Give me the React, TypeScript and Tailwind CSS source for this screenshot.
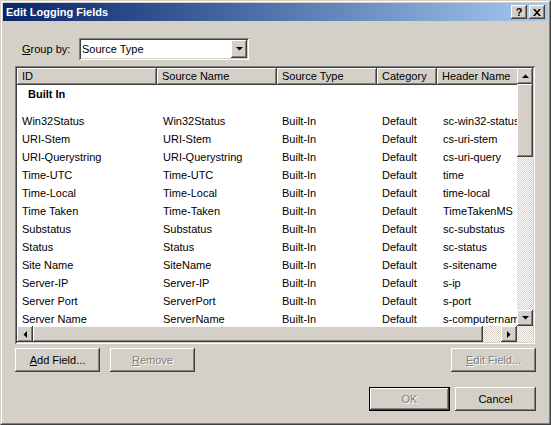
import React from "react";

const raised =
  "bg-[#d4d0c8] shadow-[inset_-1px_-1px_#404040,inset_1px_1px_#ffffff,inset_-2px_-2px_#808080,inset_2px_2px_#d4d0c8]";
const sunken =
  "shadow-[inset_1px_1px_#808080,inset_-1px_-1px_#ffffff,inset_2px_2px_#404040,inset_-2px_-2px_#d4d0c8]";
const checker =
  "bg-[repeating-conic-gradient(#d4d0c8_0_25%,#ffffff_0_50%)] bg-[length:2px_2px]";
const disabledText = "text-[#808080] [text-shadow:1px_1px_0_#ffffff]";

const rows: string[][] = [
  ["Win32Status", "Win32Status", "Built-In", "Default", "sc-win32-status"],
  ["URI-Stem", "URI-Stem", "Built-In", "Default", "cs-uri-stem"],
  ["URI-Querystring", "URI-Querystring", "Built-In", "Default", "cs-uri-query"],
  ["Time-UTC", "Time-UTC", "Built-In", "Default", "time"],
  ["Time-Local", "Time-Local", "Built-In", "Default", "time-local"],
  ["Time Taken", "Time-Taken", "Built-In", "Default", "TimeTakenMS"],
  ["Substatus", "Substatus", "Built-In", "Default", "sc-substatus"],
  ["Status", "Status", "Built-In", "Default", "sc-status"],
  ["Site Name", "SiteName", "Built-In", "Default", "s-sitename"],
  ["Server-IP", "Server-IP", "Built-In", "Default", "s-ip"],
  ["Server Port", "ServerPort", "Built-In", "Default", "s-port"],
  ["Server Name", "ServerName", "Built-In", "Default", "s-computername"],
];

const cols = [
  { w: "w-[140px]", label: "ID", pl: "pl-[5px]", bpl: "pl-[5px]" },
  { w: "w-[120px]", label: "Source Name", pl: "pl-[5px]", bpl: "pl-[6px]" },
  { w: "w-[100px]", label: "Source Type", pl: "pl-[5px]", bpl: "pl-[5px]" },
  { w: "w-[60px]", label: "Category", pl: "pl-[5px]", bpl: "pl-[5px]" },
  { w: "w-[100px]", label: "Header Name", pl: "pl-[5px]", bpl: "pl-[6px]" },
];

function Arrow({ dir }: { dir: "up" | "down" | "left" | "right" }) {
  const pts: Record<string, string> = {
    up: "0,4 7,4 3.5,0.5",
    down: "0,0 7,0 3.5,3.5",
    left: "4,0 4,7 0.5,3.5",
    right: "0,0 0,7 3.5,3.5",
  };
  const vertical = dir === "up" || dir === "down";
  return (
    <svg
      width={vertical ? 7 : 4}
      height={vertical ? 4 : 7}
      viewBox={vertical ? "0 0 7 4" : "0 0 4 7"}
      className="block"
    >
      <polygon points={pts[dir]} fill="#000000" />
    </svg>
  );
}

function ScrollBtn({ dir }: { dir: "up" | "down" | "left" | "right" }) {
  return (
    <div className={`w-[16px] h-[16px] shrink-0 flex items-center justify-center ${raised}`}>
      <Arrow dir={dir} />
    </div>
  );
}

function Button({
  children,
  w,
  disabled,
  isDefault,
}: {
  children: React.ReactNode;
  w: string;
  disabled?: boolean;
  isDefault?: boolean;
}) {
  const inner = (
    <div
      className={`h-full w-full flex items-center justify-center ${raised} ${
        disabled ? disabledText : "text-black"
      }`}
    >
      {children}
    </div>
  );
  if (isDefault) {
    return <div className={`${w} h-[24px] border border-black`}>{inner}</div>;
  }
  return <div className={`${w} h-[24px]`}>{inner}</div>;
}

export default function App() {
  return (
    <div className="w-[551px] h-[425px] font-['Liberation_Sans',Arial,sans-serif] text-[11px] leading-[13px] text-black select-none">
      <div className="w-full h-full border border-t-[#d4d0c8] border-l-[#d4d0c8] border-b-[#404040] border-r-[#404040]">
        <div className="w-full h-full border border-t-white border-l-white border-b-[#808080] border-r-[#808080] bg-[#d4d0c8] p-[1px] flex flex-col">
          {/* Title bar */}
          <div className="h-[18px] shrink-0 flex items-center bg-gradient-to-r from-[#0a246a] to-[#a6caf0] pl-[3px] pr-[3px]">
            <span className="text-white font-bold text-[11px]">Edit Logging Fields</span>
            <div className="ml-auto flex gap-[2px]">
              <div className={`w-[16px] h-[14px] flex items-center justify-center ${raised}`}>
                <span className="font-bold text-[11px] leading-[11px] text-black pt-[1px]">?</span>
              </div>
              <div className={`w-[16px] h-[14px] flex items-center justify-center ${raised}`}>
                <svg width="8" height="7" viewBox="0 0 8 7" className="block">
                  <path d="M0 0h2l2 2.2L6 0h2L5 3.5 8 7H6L4 4.8 2 7H0l3-3.5z" fill="#000" />
                </svg>
              </div>
            </div>
          </div>

          {/* Body */}
          <div className="flex-1 flex flex-col pl-[12px] pt-[17px]">
            {/* Group by */}
            <div className="flex items-center h-[22px]">
              <span className="ml-[7px] w-[57px]">
                <span className="underline">G</span>roup by:
              </span>
              <div className={`w-[170px] h-[22px] bg-white p-[2px] flex ${sunken}`}>
                <div className="flex-1 flex items-center pl-[1px] bg-white">Source Type</div>
                <div className={`w-[16px] h-[18px] flex items-center justify-center ${raised}`}>
                  <Arrow dir="down" />
                </div>
              </div>
            </div>

            {/* List view */}
            <div className={`mt-[6px] w-[520px] h-[278px] p-[2px] bg-white flex flex-col ${sunken}`}>
              <div className="flex h-[258px]">
                <div className="w-[500px] flex flex-col overflow-hidden">
                  <div className="flex h-[17px] shrink-0">
                    {cols.map((c) => (
                      <div
                        key={c.label}
                        className={`${c.w} shrink-0 h-full flex items-center whitespace-nowrap overflow-hidden ${c.pl} ${raised}`}
                      >
                        {c.label}
                      </div>
                    ))}
                  </div>
                  <div className="flex-1 overflow-hidden">
                    <div className="h-[27px] pl-[11px] pt-[1px] font-bold leading-[16px]">Built In</div>
                    {rows.map((r) => (
                      <div key={r[0]} className="flex h-[18px] items-center">
                        {r.map((cell, i) => (
                          <div
                            key={i}
                            className={`${cols[i].w} shrink-0 whitespace-nowrap overflow-hidden ${cols[i].bpl}`}
                          >
                            {cell}
                          </div>
                        ))}
                      </div>
                    ))}
                  </div>
                </div>
                <div className="w-[16px] flex flex-col">
                  <ScrollBtn dir="up" />
                  <div className={`h-[73px] shrink-0 ${raised}`} />
                  <div className={`flex-1 ${checker}`} />
                  <ScrollBtn dir="down" />
                </div>
              </div>
              <div className="flex h-[16px]">
                <ScrollBtn dir="left" />
                <div className={`w-[450px] shrink-0 ${raised}`} />
                <div className={`flex-1 ${checker}`} />
                <ScrollBtn dir="right" />
                <div className={`w-[16px] ${checker}`} />
              </div>
            </div>

            {/* Field buttons */}
            <div className="mt-[4px] w-[521px] flex">
              <Button w="w-[85px]">
                <span>
                  <span className="underline">A</span>dd Field...
                </span>
              </Button>
              <div className="ml-[10px]">
                <Button w="w-[85px]" disabled>
                  <span>
                    <span className="underline">R</span>emove
                  </span>
                </Button>
              </div>
              <div className="ml-auto">
                <Button w="w-[85px]" disabled>
                  <span>
                    <span className="underline">E</span>dit Field...
                  </span>
                </Button>
              </div>
            </div>

            {/* OK / Cancel */}
            <div className="mt-[15px] w-[521px] flex justify-end gap-[5px]">
              <Button w="w-[81px]" disabled isDefault>
                OK
              </Button>
              <Button w="w-[81px]">Cancel</Button>
            </div>
          </div>
        </div>
      </div>
    </div>
  );
}
